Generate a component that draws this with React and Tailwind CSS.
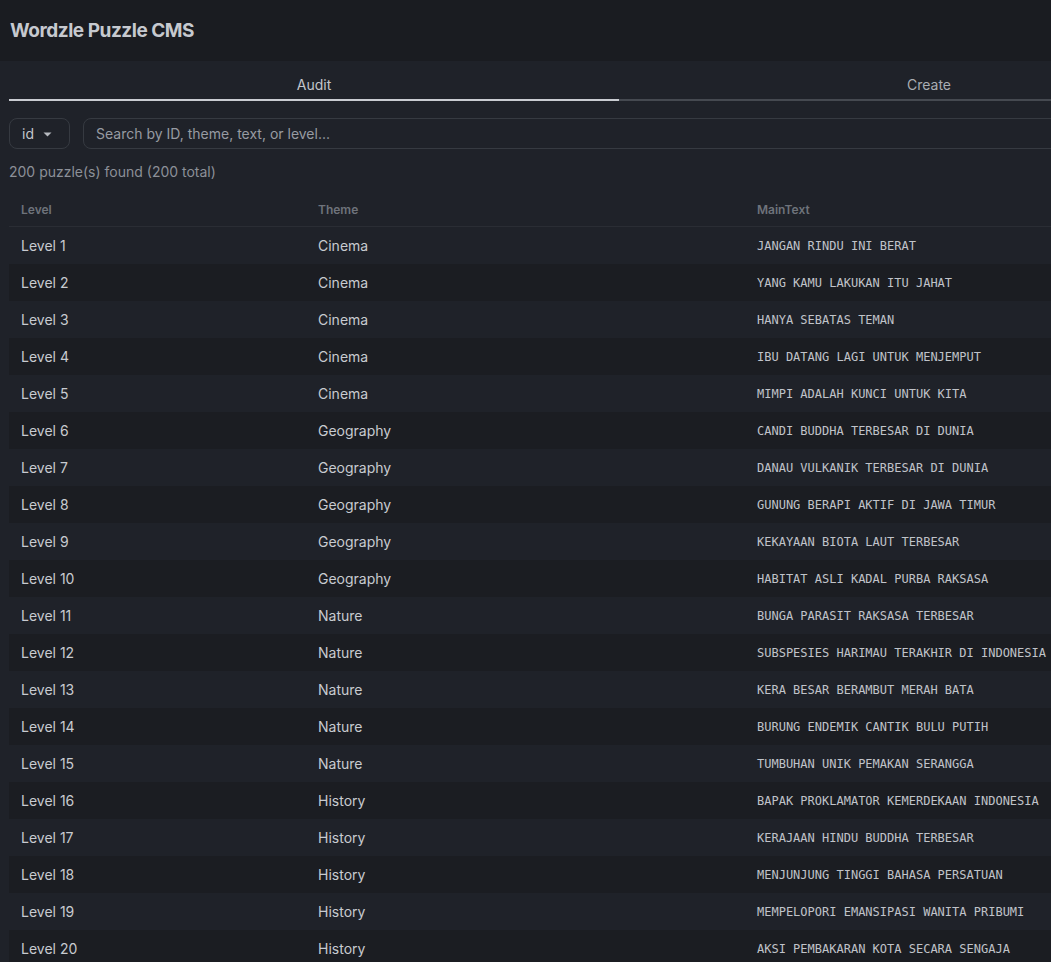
const PUZZLES = [
  ["Level 1", "Cinema", "JANGAN RINDU INI BERAT"],
  ["Level 2", "Cinema", "YANG KAMU LAKUKAN ITU JAHAT"],
  ["Level 3", "Cinema", "HANYA SEBATAS TEMAN"],
  ["Level 4", "Cinema", "IBU DATANG LAGI UNTUK MENJEMPUT"],
  ["Level 5", "Cinema", "MIMPI ADALAH KUNCI UNTUK KITA"],
  ["Level 6", "Geography", "CANDI BUDDHA TERBESAR DI DUNIA"],
  ["Level 7", "Geography", "DANAU VULKANIK TERBESAR DI DUNIA"],
  ["Level 8", "Geography", "GUNUNG BERAPI AKTIF DI JAWA TIMUR"],
  ["Level 9", "Geography", "KEKAYAAN BIOTA LAUT TERBESAR"],
  ["Level 10", "Geography", "HABITAT ASLI KADAL PURBA RAKSASA"],
  ["Level 11", "Nature", "BUNGA PARASIT RAKSASA TERBESAR"],
  ["Level 12", "Nature", "SUBSPESIES HARIMAU TERAKHIR DI INDONESIA"],
  ["Level 13", "Nature", "KERA BESAR BERAMBUT MERAH BATA"],
  ["Level 14", "Nature", "BURUNG ENDEMIK CANTIK BULU PUTIH"],
  ["Level 15", "Nature", "TUMBUHAN UNIK PEMAKAN SERANGGA"],
  ["Level 16", "History", "BAPAK PROKLAMATOR KEMERDEKAAN INDONESIA"],
  ["Level 17", "History", "KERAJAAN HINDU BUDDHA TERBESAR"],
  ["Level 18", "History", "MENJUNJUNG TINGGI BAHASA PERSATUAN"],
  ["Level 19", "History", "MEMPELOPORI EMANSIPASI WANITA PRIBUMI"],
  ["Level 20", "History", "AKSI PEMBAKARAN KOTA SECARA SENGAJA"],
];

export default function App() {
  return (
    <div className="w-[1051px] h-[962px] overflow-hidden bg-[#1f2229] font-['Inter','Liberation_Sans',sans-serif]">
      <header className="h-[61px] bg-[#1a1c21] px-[10px] pt-[2px] flex items-center">
        <h1 className="text-[19px] font-bold tracking-tight text-[#c6c9cf]">Wordzle Puzzle CMS</h1>
      </header>

      <div className="w-[1248px] px-[9px]">
        {/* tabs */}
        <div className="grid grid-cols-[610px_620px]">
          <button className="h-[40px] pt-[10px] border-b-2 border-[#c9ccd1] text-sm text-[#c3c6cc]">Audit</button>
          <button className="h-[40px] pt-[10px] border-b-2 border-[#454950] text-sm text-[#a9adb3]">Create</button>
        </div>

        {/* filters */}
        <div className="mt-[17px] flex gap-[13px]">
          <div className="h-[31px] w-[61px] shrink-0 rounded-lg border border-[#363a41] flex items-center pl-[12px] gap-[9px] text-sm text-[#c3c6cc]">
            <span>id</span>
            <svg width="9" height="5" viewBox="0 0 9 5" className="mt-[1px]">
              <path d="M0.5 0.5h8L4.5 4.5z" fill="#b6b9bf" />
            </svg>
          </div>
          <div className="h-[31px] flex-1 rounded-lg border border-[#363a41] flex items-center px-[12px] text-sm text-[#979ba2]">
            Search by ID, theme, text, or level...
          </div>
        </div>

        <p className="mt-[13px] text-sm leading-5 text-[#8c9098]">200 puzzle(s) found (200 total)</p>

        {/* table */}
        <div className="mt-[9px] rounded-lg">
          <div className="grid grid-cols-[297px_439px_1fr] h-[36px] pt-[2px] items-center border-b border-[#2a2d34] text-xs font-semibold text-[#6e737b]">
            <div className="px-[12px]">Level</div>
            <div className="px-[12px]">Theme</div>
            <div className="px-[12px]">MainText</div>
          </div>
          {PUZZLES.map(([level, theme, text], i) => (
            <div
              key={level}
              className={`grid grid-cols-[297px_439px_1fr] h-[37px] items-center text-sm text-[#c8cbd0] ${
                i % 2 === 1 ? "bg-[#1b1d22]" : ""
              }`}
            >
              <div className="px-[12px]">{level}</div>
              <div className="px-[12px]">{theme}</div>
              <div className="px-[12px] font-['DejaVu_Sans_Mono',monospace] text-xs text-[#c0c3c9]">{text}</div>
            </div>
          ))}
        </div>
      </div>
    </div>
  );
}
